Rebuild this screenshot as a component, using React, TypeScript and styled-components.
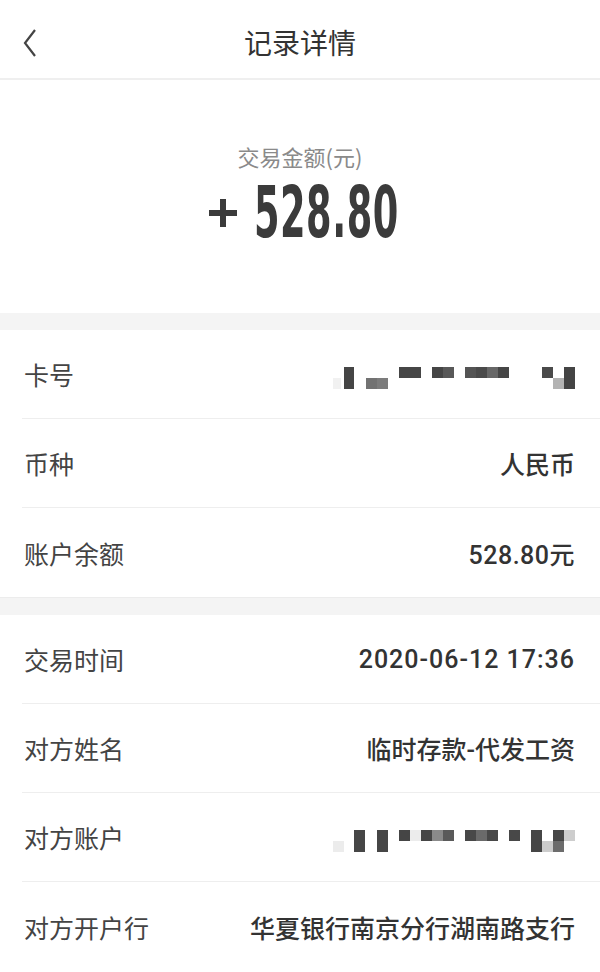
import React from 'react';
import styled, { createGlobalStyle } from 'styled-components';

const GlobalStyle = createGlobalStyle`
  html, body {
    margin: 0;
    padding: 0;
    background: #ffffff;
  }
  body {
    font-family: "Noto Sans CJK SC", "Noto Sans", sans-serif;
    color: #333;
  }
`;

type Block = [number, number, number, number, string];

// mosaic blocks (x, y, w, h, colour), relative to a 242x22 box
const cardBlocks: Block[] = [
  [0, 11, 8, 11, '#f1f1f1'],
  [11, 0, 10, 22, '#454545'],
  [33, 11, 11, 11, '#727272'],
  [44, 11, 11, 11, '#7c7c7c'],
  [66, 0, 22, 11, '#464646'],
  [99, 0, 11, 11, '#454545'],
  [110, 0, 11, 11, '#585858'],
  [132, 0, 11, 11, '#545454'],
  [143, 0, 11, 11, '#4a4a4a'],
  [154, 0, 11, 11, '#676767'],
  [165, 0, 11, 11, '#464646'],
  [209, 0, 11, 11, '#4a4a4a'],
  [220, 11, 11, 11, '#b3b3b3'],
  [231, 0, 11, 22, '#444444'],
];

const accountBlocks: Block[] = [
  [0, 11, 11, 11, '#ececec'],
  [21, 0, 11, 22, '#464646'],
  [44, 0, 11, 22, '#464646'],
  [66, 0, 11, 11, '#454545'],
  [77, 0, 11, 11, '#ececec'],
  [88, 0, 11, 11, '#464646'],
  [99, 0, 11, 11, '#8a8a8a'],
  [110, 0, 11, 11, '#5a5a5a'],
  [132, 0, 11, 11, '#484848'],
  [143, 0, 11, 11, '#6a6a6a'],
  [154, 0, 11, 11, '#484848'],
  [176, 0, 11, 11, '#484848'],
  [198, 0, 11, 22, '#464646'],
  [209, 11, 11, 11, '#cccccc'],
  [220, 0, 11, 11, '#464646'],
  [220, 11, 11, 11, '#6c6c6c'],
  [231, 0, 11, 11, '#cdcdcd'],
];

function Mosaic({ blocks }: { blocks: Block[] }) {
  return (
    <svg width="242" height="22" viewBox="0 0 242 22">
      {blocks.map(([x, y, w, h, c], i) => (
        <rect key={i} x={x} y={y} width={w} height={h} fill={c} />
      ))}
    </svg>
  );
}

function App() {
  return (
    <Page>
      <GlobalStyle />
      <Header>
        <Back>
          <svg width="14" height="28" viewBox="0 0 14 28">
            <path d="M12 1 L2 14 L12 27" fill="none" stroke="#444" strokeWidth="2.2" />
          </svg>
        </Back>
        <Title>记录详情</Title>
      </Header>

      <AmountSection>
        <AmountLabel>交易金额(元)</AmountLabel>
        <Amount>
          <Plus>
            <svg width="28" height="28" viewBox="0 0 28 28">
              <path d="M0 14 H28 M14 0 V28" stroke="#3b3b3b" strokeWidth="6" />
            </svg>
          </Plus>
          <DigitsBox>
            <Digits>528.80</Digits>
          </DigitsBox>
        </Amount>
      </AmountSection>

      <Gap />

      <Group>
        <Row>
          <Label>卡号</Label>
          <MosaicWrap>
            <Mosaic blocks={cardBlocks} />
          </MosaicWrap>
        </Row>
        <Row>
          <Label>币种</Label>
          <Value>人民币</Value>
        </Row>
        <Row $last>
          <Label>账户余额</Label>
          <Value $spacing={0.5}>528.80元</Value>
        </Row>
      </Group>

      <Gap $top />

      <Group>
        <Row>
          <Label>交易时间</Label>
          <Value $spacing={1}>2020-06-12 17:36</Value>
        </Row>
        <Row>
          <Label>对方姓名</Label>
          <Value>临时存款-代发工资</Value>
        </Row>
        <Row>
          <Label>对方账户</Label>
          <MosaicWrap>
            <Mosaic blocks={accountBlocks} />
          </MosaicWrap>
        </Row>
        <Row $last>
          <Label>对方开户行</Label>
          <Value>华夏银行南京分行湖南路支行</Value>
        </Row>
      </Group>
    </Page>
  );
}

const Page = styled.div`
  width: 600px;
  min-height: 972px;
  background: #fff;
  overflow: hidden;
`;

const Header = styled.div`
  height: 78px;
  display: flex;
  align-items: center;
  justify-content: center;
  position: relative;
  border-bottom: 2px solid #efefef;
`;

const Back = styled.div`
  position: absolute;
  left: 23px;
  top: 29px;
  display: flex;
`;

const Title = styled.div`
  font-size: 28px;
  color: #333;
  margin-top: 6px;
`;

const AmountSection = styled.div`
  height: 233px;
  display: flex;
  flex-direction: column;
  align-items: center;
  padding-top: 61px;
  box-sizing: border-box;
`;

const AmountLabel = styled.div`
  font-size: 22px;
  color: #8a8a8a;
  line-height: 30px;
`;

const Amount = styled.div`
  display: flex;
  align-items: center;
  gap: 17px;
  margin-top: 6px;
  margin-left: 4px;
  height: 70px;
`;

const Plus = styled.span`
  display: flex;
  margin-top: 2px;
`;

/* the glyphs are squeezed horizontally; the box holds the squeezed width */
const DigitsBox = styled.span`
  display: block;
  width: 142px;
  height: 70px;
  overflow: visible;
`;

const Digits = styled.span`
  display: inline-block;
  font-family: "DejaVu Sans", sans-serif;
  font-weight: 700;
  color: #3b3b3b;
  font-size: 72px;
  line-height: 70px;
  white-space: nowrap;
  transform: scaleX(0.51);
  transform-origin: left center;
  letter-spacing: 1px;
`;

const Gap = styled.div<{ $top?: boolean }>`
  height: 17px;
  background: #f4f4f4;
  border-top: ${(p) => (p.$top ? '1px solid #ececec' : 'none')};
`;

const Group = styled.div`
  background: #fff;
`;

const Row = styled.div<{ $last?: boolean }>`
  height: 89px;
  margin-left: 22px;
  padding-right: 25px;
  display: flex;
  align-items: center;
  justify-content: space-between;
  border-bottom: ${(p) => (p.$last ? 'none' : '1px solid #eeeeee')};
  box-sizing: border-box;
`;

const Label = styled.div`
  font-size: 25px;
  color: #444;
  padding-left: 2px;
  font-weight: 400;
`;

const Value = styled.div<{ $spacing?: number }>`
  font-family: "Roboto", "Noto Sans CJK SC", sans-serif;
  font-size: 25px;
  font-weight: 500;
  color: #333;
  letter-spacing: ${(p) => p.$spacing ?? 0}px;
`;

const MosaicWrap = styled.div`
  display: flex;
  margin-top: 8px;
`;

export default App;
